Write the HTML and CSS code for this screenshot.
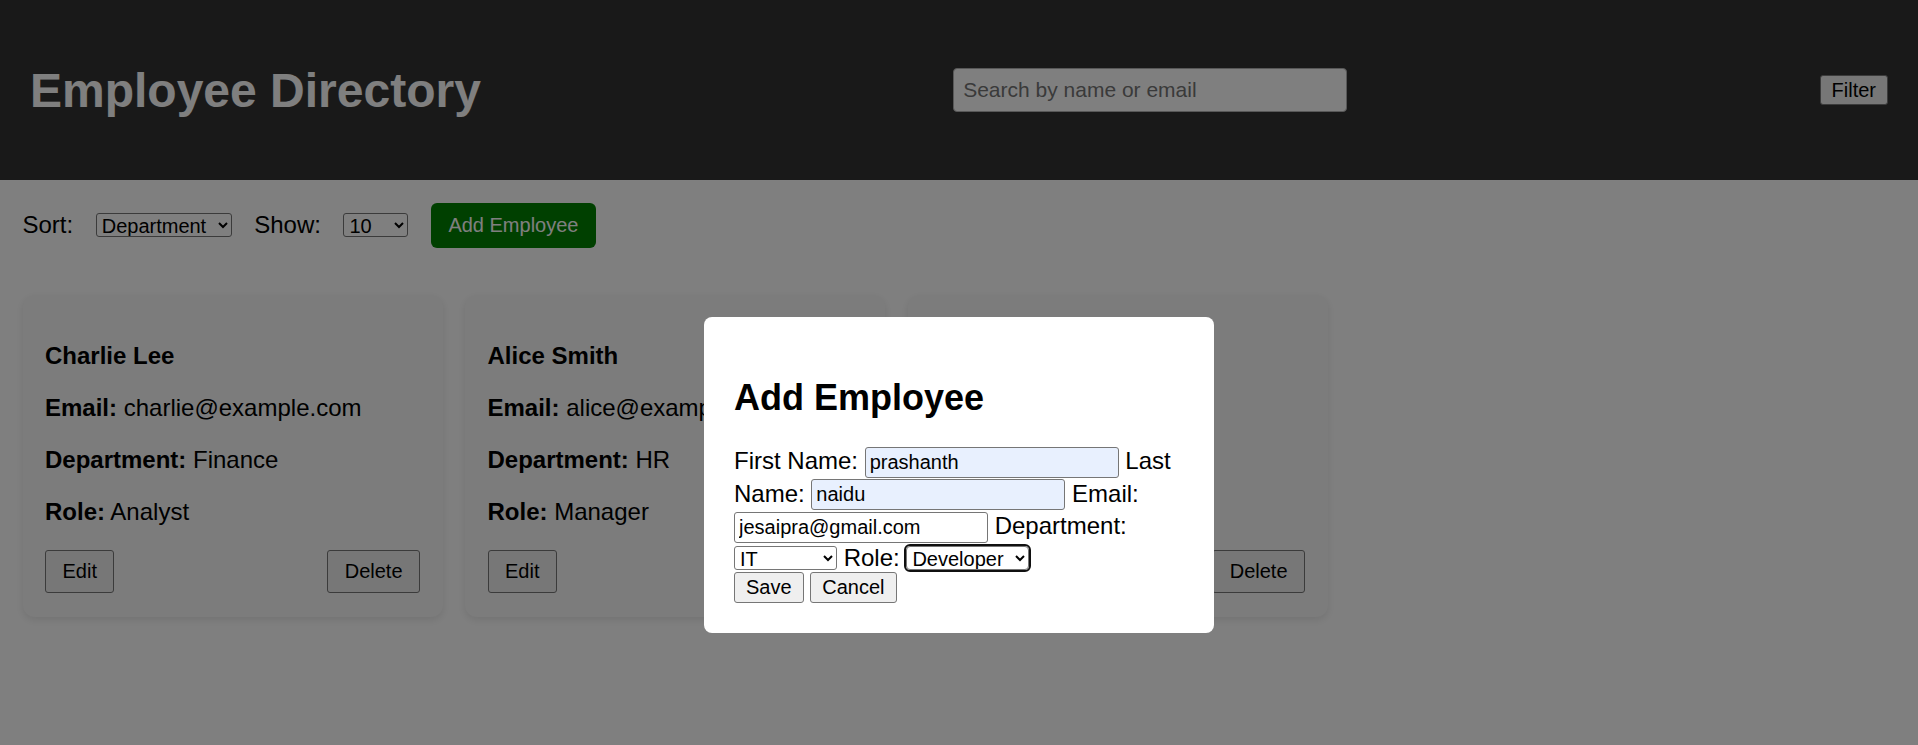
FILE: index.html
```html
<!DOCTYPE html>
<html lang="en">
<head>
<meta charset="utf-8">
<title>Employee Directory</title>
<link rel="stylesheet" href="styles.css">
</head>
<body>
<header class="topbar">
  <h1 class="title">Employee Directory</h1>
  <input class="search" type="text" placeholder="Search by name or email">
  <button class="btn filter-btn" type="button">Filter</button>
</header>

<main class="main">
  <div class="controls">
    <label class="ctl-label">Sort:</label>
    <select class="sel sel-sort">
      <option>Department</option>
      <option>Name</option>
    </select>
    <label class="ctl-label">Show:</label>
    <select class="sel sel-show">
      <option>10</option>
      <option>25</option>
      <option>50</option>
    </select>
    <button class="add-btn" type="button">Add Employee</button>
  </div>

  <div class="cards">
    <div class="card">
      <p class="card-line"><strong>Charlie Lee</strong></p>
      <p class="card-line"><strong>Email:</strong> charlie@example.com</p>
      <p class="card-line"><strong>Department:</strong> Finance</p>
      <p class="card-line"><strong>Role:</strong> Analyst</p>
      <div class="card-actions">
        <button class="btn card-btn" type="button">Edit</button>
        <button class="btn card-btn" type="button">Delete</button>
      </div>
    </div>
    <div class="card">
      <p class="card-line"><strong>Alice Smith</strong></p>
      <p class="card-line"><strong>Email:</strong> alice@example.com</p>
      <p class="card-line"><strong>Department:</strong> HR</p>
      <p class="card-line"><strong>Role:</strong> Manager</p>
      <div class="card-actions">
        <button class="btn card-btn" type="button">Edit</button>
        <button class="btn card-btn" type="button">Delete</button>
      </div>
    </div>
    <div class="card">
      <p class="card-line"><strong>Bob Brown</strong></p>
      <p class="card-line"><strong>Email:</strong> bob@mail.com</p>
      <p class="card-line"><strong>Department:</strong> IT</p>
      <p class="card-line"><strong>Role:</strong> Developer</p>
      <div class="card-actions">
        <button class="btn card-btn" type="button">Edit</button>
        <button class="btn card-btn" type="button">Delete</button>
      </div>
    </div>
  </div>
</main>

<div class="overlay">
  <div class="modal">
    <h2 class="modal-title">Add Employee</h2>
    <form class="form">
      <label for="f-first">First Name:</label> <input id="f-first" class="field autofill" type="text" value="prashanth">
      <label for="f-last">Last Name:</label> <input id="f-last" class="field autofill" type="text" value="naidu">
      <label for="f-email">Email:</label> <input id="f-email" class="field" type="email" value="jesaipra@gmail.com">
      <label for="f-dept">Department:</label> <select id="f-dept" class="sel sel-dept">
        <option>IT</option>
        <option>HR</option>
        <option>Finance</option>
      </select>
      <label for="f-role">Role:</label> <select id="f-role" class="sel sel-role focused">
        <option>Developer</option>
        <option>Manager</option>
        <option>Analyst</option>
      </select>
      <div class="form-actions">
        <button class="btn modal-btn" type="button">Save</button>
        <button class="btn modal-btn" type="button">Cancel</button>
      </div>
    </form>
  </div>
</div>
</body>
</html>
```

FILE: styles.css
```css
* {
  box-sizing: border-box;
}

html,
body {
  margin: 0;
  padding: 0;
}

body {
  font-family: "Liberation Sans", Arial, sans-serif;
  font-size: 24px;
  line-height: normal;
  background: #ffffff;
  color: #000000;
}

/* Header */
.topbar {
  display: flex;
  justify-content: space-between;
  align-items: center;
  height: 180px;
  padding: 0 30px;
  background: #333333;
  color: #ffffff;
}

.title {
  margin: 0;
  font-size: 48px;
  font-weight: bold;
}

.search {
  width: 394px;
  height: 44px;
  padding: 0 9px;
  font-family: "Liberation Sans", Arial, sans-serif;
  font-size: 21px;
  color: #000;
  background: #ffffff;
  border: 1px solid #b0b0b0;
  border-radius: 4px;
}

.search::placeholder {
  color: #757575;
}

.btn {
  font-family: "Liberation Sans", Arial, sans-serif;
  font-size: 20px;
  color: #000;
  background: #efefef;
  border: 1px solid #767676;
  border-radius: 3px;
  line-height: normal;
}

.filter-btn {
  height: 30px;
  padding: 0 11px;
}

/* Main */
.main {
  padding: 22.5px;
}

.controls {
  display: flex;
  align-items: center;
  gap: 22.5px;
  margin-bottom: 47.5px;
}

.ctl-label {
  font-size: 24px;
}

.sel {
  height: 24px;
  padding: 0 0 0 1px;
  font-family: "Liberation Sans", Arial, sans-serif;
  font-size: 20px;
  color: #000;
  background-color: #ffffff;
  border: 1px solid #767676;
  border-radius: 3px;
}

.sel-sort {
  width: 136px;
}

.sel-show {
  width: 65px;
}

.add-btn {
  height: 45px;
  padding: 0 17.5px;
  font-family: "Liberation Sans", Arial, sans-serif;
  font-size: 20px;
  color: #ffffff;
  background: #008000;
  border: none;
  border-radius: 6px;
}

/* Cards */
.cards {
  display: flex;
  gap: 22.5px;
}

.card {
  width: 420px;
  padding: 22.5px 22.5px 24px;
  background: #f8f8f8;
  border-radius: 12px;
  box-shadow: 0 3px 9px rgba(0, 0, 0, 0.1);
}

.card-line {
  margin: 24px 0;
}

.card-actions {
  display: flex;
  justify-content: space-between;
  margin-top: 1.5px;
}

.card-btn {
  height: 43px;
  padding: 0 16.5px;
}

/* Modal */
.overlay {
  position: fixed;
  top: 0;
  left: 0;
  right: 0;
  bottom: 0;
  display: flex;
  justify-content: center;
  align-items: flex-start;
  padding-top: 317px;
  background: rgba(0, 0, 0, 0.5);
}

.modal {
  width: 510px;
  padding: 30px;
  background: #ffffff;
  border-radius: 8px;
}

.modal-title {
  margin: 30px 0 27px;
  font-size: 36px;
  font-weight: bold;
}

.form {
  font-size: 24px;
}

.field {
  width: 254px;
  height: 31px;
  margin: 0.75px 0;
  padding: 0 4px;
  font-family: "Liberation Sans", Arial, sans-serif;
  font-size: 20px;
  color: #000;
  background: #ffffff;
  border: 1px solid #767676;
  border-radius: 3px;
}

.autofill {
  background: #e8f0fe;
}

.sel-dept {
  width: 103px;
}

.sel-role {
  width: 123px;
}

.focused {
  outline: 2px solid #101010;
  outline-offset: 0;
  border-radius: 4px;
}

.modal-btn {
  height: 31px;
  padding: 0 11px;
}
```
